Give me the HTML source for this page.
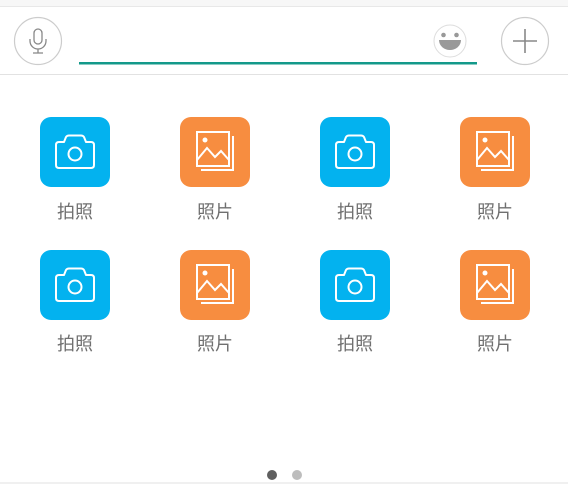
<!DOCTYPE html><html><head><meta charset="utf-8"><style>
body{margin:0;width:568px;height:484px;background:#fff;position:relative;overflow:hidden;font-family:"Liberation Sans","Noto Sans CJK SC",sans-serif}
.top{position:absolute;left:0;top:0;width:568px;height:6px;background:#f7f7f7;border-bottom:1px solid #e8e8e8}
.bar{position:absolute;left:0;top:7px;width:568px;height:67px;background:#fff;border-bottom:1px solid #e2e2e2}
.it{position:absolute;width:70px;height:70px;border-radius:11px}
.b{background:#03b2ef}.o{background:#f78d40}
.lb{position:absolute;width:100px;text-align:center;font-size:18px;color:#707070}
.d{position:absolute;width:10px;height:10px;border-radius:50%;top:470px}
</style></head><body>
<div class="top"></div><div class="bar"></div>
<svg style="position:absolute;left:0;top:0" width="568" height="80">
<circle cx="38" cy="41" r="23.5" fill="none" stroke="#ccc" stroke-width="1.2"/>
<rect x="34" y="29" width="8" height="15" rx="4" fill="none" stroke="#888" stroke-width="1.3"/>
<path d="M30 39v2a8 8 0 0 0 16 0v-2M38 49v4M33 53h10" fill="none" stroke="#888" stroke-width="1.3"/>
<rect x="79" y="62" width="398" height="2.5" fill="#13998a"/>
<circle cx="450" cy="41" r="16" fill="#fff" stroke="#ddd"/>
<circle cx="443.5" cy="35" r="2.3" fill="#999"/><circle cx="456.5" cy="35" r="2.3" fill="#999"/>
<path d="M439 40h22a11 10 0 0 1-22 0z" fill="#999"/>
<circle cx="525" cy="41" r="23.5" fill="none" stroke="#ccc" stroke-width="1.2"/>
<path d="M525 29v24M513 41h24" stroke="#888" stroke-width="1.6"/>
</svg>
<div class="it b" style="left:40px;top:117px"></div><div class="it o" style="left:180px;top:117px"></div><div class="it b" style="left:320px;top:117px"></div><div class="it o" style="left:460px;top:117px"></div>
<div class="it b" style="left:40px;top:250px"></div><div class="it o" style="left:180px;top:250px"></div><div class="it b" style="left:320px;top:250px"></div><div class="it o" style="left:460px;top:250px"></div>
<svg style="position:absolute;left:0;top:0" width="568" height="400">
<defs>
<g id="cam" fill="none" stroke="#fff" stroke-width="2" stroke-linejoin="round"><path d="M19 25h5l2-5q1-1.5 3-1.5h12q2 0 3 1.5l2 5h5q3 0 3 3v20q0 3-3 3h-32q-3 0-3-3v-20q0-3 3-3z"/><circle cx="35" cy="37" r="6.5"/></g>
<g id="pic" fill="none" stroke="#fff" stroke-width="2"><rect x="17" y="15" width="32" height="34"/><path d="M53 19v34h-32"/><circle cx="25" cy="23" r="2.5" fill="#fff" stroke="none"/><path d="M17 43l10-12 8 9 6-6 8 9"/></g>
</defs>
<use href="#cam" x="40" y="117"/><use href="#pic" x="180" y="117"/><use href="#cam" x="320" y="117"/><use href="#pic" x="460" y="117"/>
<use href="#cam" x="40" y="250"/><use href="#pic" x="180" y="250"/><use href="#cam" x="320" y="250"/><use href="#pic" x="460" y="250"/>
</svg>
<div class="lb" style="left:25px;top:198px">拍照</div><div class="lb" style="left:165px;top:198px">照片</div><div class="lb" style="left:305px;top:198px">拍照</div><div class="lb" style="left:445px;top:198px">照片</div>
<div class="lb" style="left:25px;top:330px">拍照</div><div class="lb" style="left:165px;top:330px">照片</div><div class="lb" style="left:305px;top:330px">拍照</div><div class="lb" style="left:445px;top:330px">照片</div>
<div class="d" style="left:267px;background:#5f5f5f"></div><div class="d" style="left:292px;background:#bdbdbd"></div>
<div style="position:absolute;left:0;top:482px;width:568px;height:2px;background:#f0f0f0"></div>
</body></html>
